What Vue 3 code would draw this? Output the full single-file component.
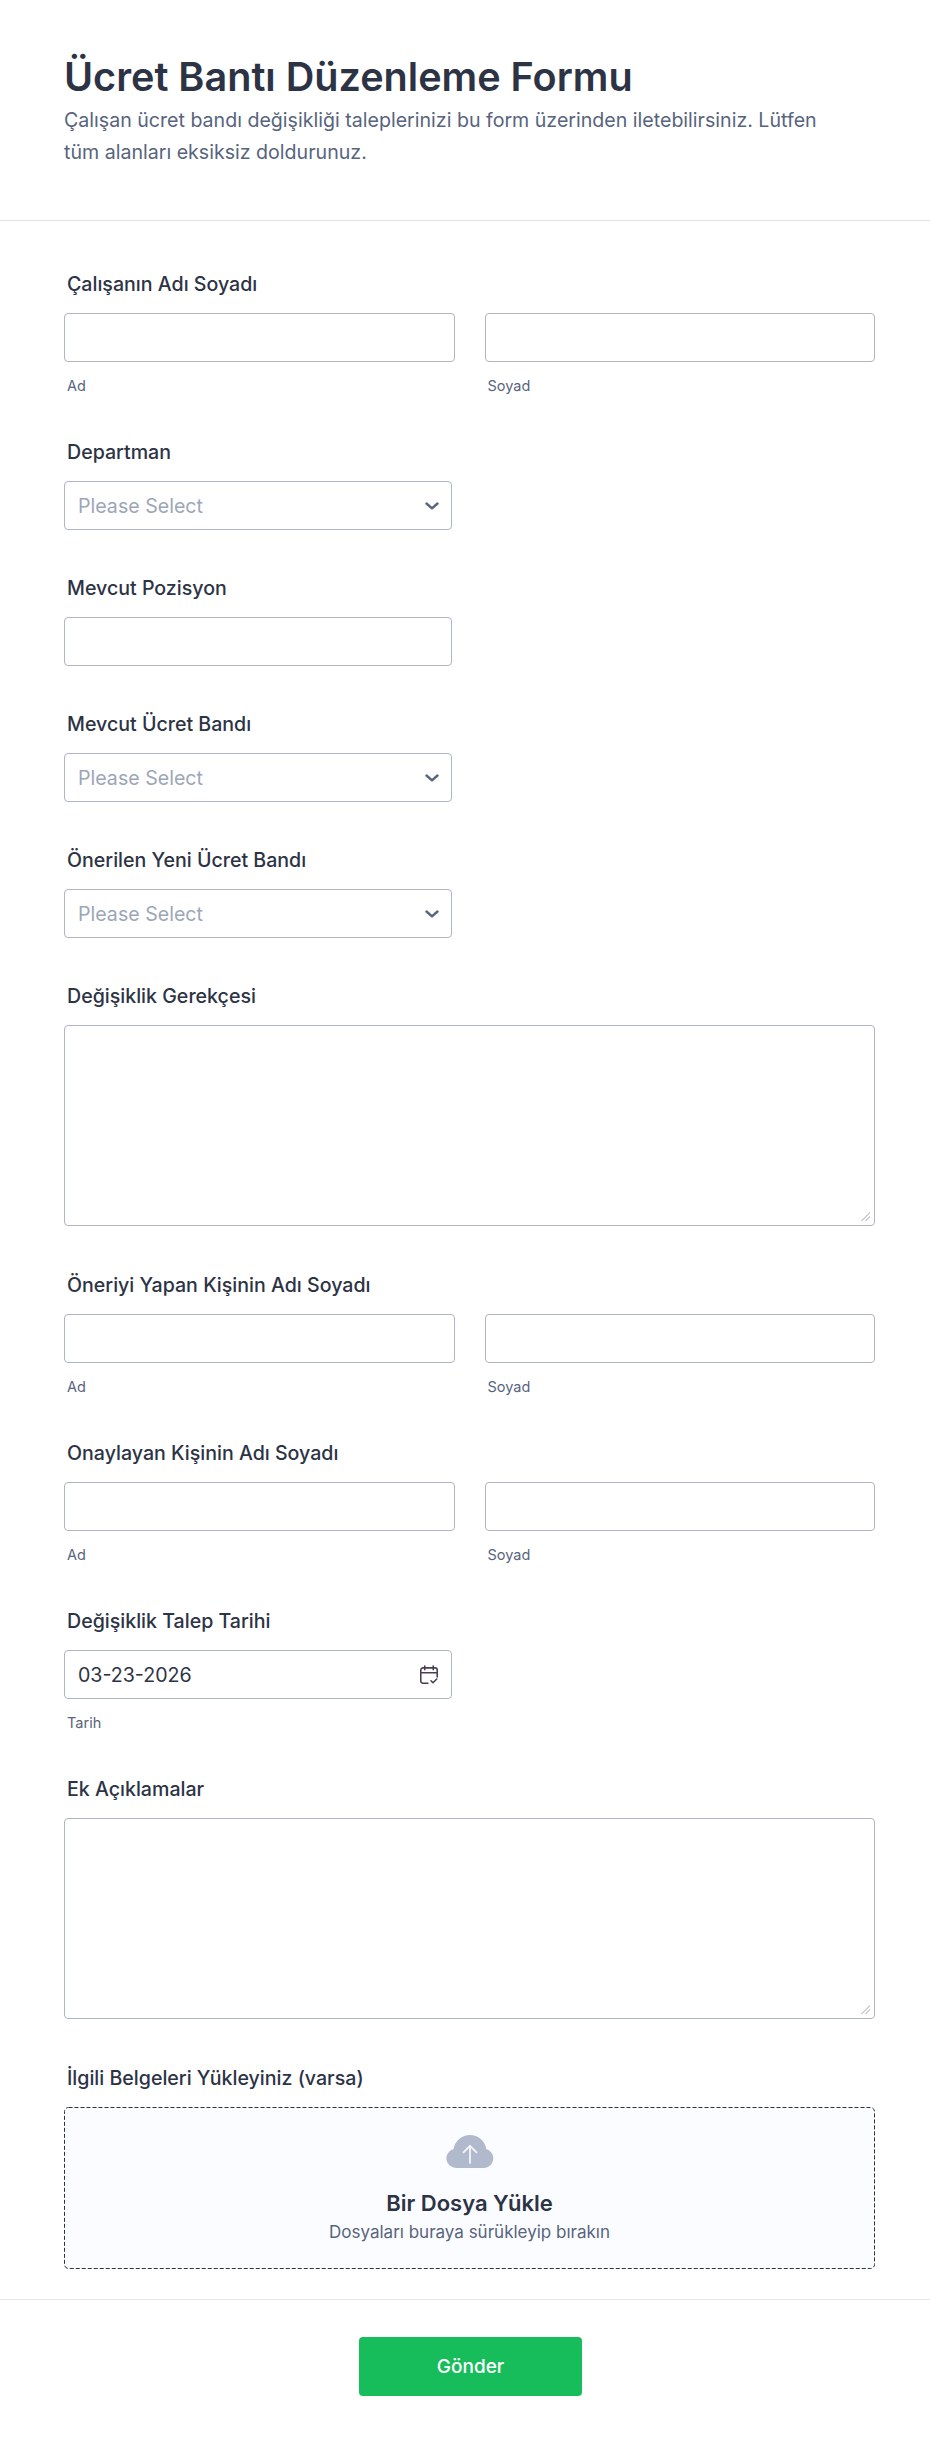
<script setup>
const sectionsTop = [
  { label: 'Departman', kind: 'select' },
  { label: 'Mevcut Pozisyon', kind: 'input' },
  { label: 'Mevcut Ücret Bandı', kind: 'select' },
  { label: 'Önerilen Yeni Ücret Bandı', kind: 'select' }
]
const people = ['Öneriyi Yapan Kişinin Adı Soyadı', 'Onaylayan Kişinin Adı Soyadı']
</script>

<template>
  <main class="form">
    <header class="form__header">
      <h1>Ücret Bantı Düzenleme Formu</h1>
      <p>Çalışan ücret bandı değişikliği taleplerinizi bu form üzerinden iletebilirsiniz. Lütfen tüm alanları eksiksiz doldurunuz.</p>
    </header>

    <section class="form__body">
      <div class="field">
        <label>Çalışanın Adı Soyadı</label>
        <div class="name-row">
          <div>
            <input class="control" type="text" />
            <span class="sublabel">Ad</span>
          </div>
          <div>
            <input class="control" type="text" />
            <span class="sublabel">Soyad</span>
          </div>
        </div>
      </div>

      <div v-for="item in sectionsTop" :key="item.label" class="field">
        <label>{{ item.label }}</label>
        <div v-if="item.kind === 'select'" class="select-wrap">
          <select class="control control--short">
            <option>Please Select</option>
          </select>
          <svg class="select-wrap__arrow" width="14" height="8" viewBox="0 0 14 8" fill="none">
            <path d="M1.500 1.500 7 6.300l5.500-4.800" stroke="#57647e" stroke-width="2.400" stroke-linecap="round" stroke-linejoin="round" />
          </svg>
        </div>
        <input v-else class="control control--short" type="text" />
      </div>

      <div class="field field--area">
        <label>Değişiklik Gerekçesi</label>
        <textarea class="control control--area"></textarea>
      </div>

      <div v-for="person in people" :key="person" class="field">
        <label>{{ person }}</label>
        <div class="name-row">
          <div>
            <input class="control" type="text" />
            <span class="sublabel">Ad</span>
          </div>
          <div>
            <input class="control" type="text" />
            <span class="sublabel">Soyad</span>
          </div>
        </div>
      </div>

      <div class="field">
        <label>Değişiklik Talep Tarihi</label>
        <div class="select-wrap">
          <input class="control control--short" type="text" value="03-23-2026" />
          <svg class="select-wrap__date" width="20" height="20" viewBox="0 0 18 18" fill="none">
            <path d="M8 16.400H3.600a2 2 0 0 1-2-2V4.600a2 2 0 0 1 2-2h10.800a2 2 0 0 1 2 2v6.200M1.600 7h14.800M5.200 1v3.200M12.800 1v3.200M10.800 14.200l1.800 1.800 3.400-3.400" stroke="#4b3f4f" stroke-width="1.400" stroke-linecap="round" stroke-linejoin="round" />
          </svg>
        </div>
        <span class="sublabel">Tarih</span>
      </div>

      <div class="field field--area">
        <label>Ek Açıklamalar</label>
        <textarea class="control control--area"></textarea>
      </div>

      <div class="field field--upload">
        <label>İlgili Belgeleri Yükleyiniz (varsa)</label>
        <div class="dropzone">
          <svg class="dropzone__border" aria-hidden="true">
            <rect />
          </svg>
          <svg width="48" height="33" viewBox="0 0 48 33">
            <path d="M10 33A9.600 9.600 0 0 1 7.600 14.100 16.800 16.800 0 0 1 24 0a16.600 16.600 0 0 1 16.300 14A9.700 9.700 0 0 1 38 33Z" fill="#b1bacd" />
            <path d="M24 28V11M17.500 17.300 24 10.800l6.500 6.500" fill="none" stroke="#f3f5fa" stroke-width="1.800" stroke-linecap="round" stroke-linejoin="round" />
          </svg>
          <strong>Bir Dosya Yükle</strong>
          <span>Dosyaları buraya sürükleyip bırakın</span>
        </div>
      </div>
    </section>

    <footer class="form__footer">
      <button type="button">Gönder</button>
    </footer>
  </main>
</template>

<style>
body {
  background: #ffffff;
}
</style>

<style scoped>
.form {
  width: 930px;
  height: 2446px;
  font-family: Inter, "Liberation Sans", sans-serif;
  color: #2c3345;
  background: #ffffff;
}

.form__header {
  height: 221px;
  box-sizing: border-box;
  padding: 52px 80px 0 64px;
  border-bottom: 1px solid #dfe1ea;
}

.form__header h1 {
  margin: 0;
  font-size: 39.6px;
  line-height: 50px;
  font-weight: 600;
}

.form__header p {
  margin: 2px 0 0;
  font-size: 19.6px;
  line-height: 32px;
  color: #57647e;
}

.form__body {
  padding: 48px 55px 0 64px;
}

.field {
  margin-bottom: 41px;
}

.field label {
  display: block;
  margin: 0 0 14px 3px;
  font-size: 19.6px;
  line-height: 30px;
  font-weight: 500;
}

.name-row {
  display: grid;
  grid-template-columns: 390.5px 390.5px;
  gap: 30px;
}

.control {
  display: block;
  width: 100%;
  height: 49px;
  box-sizing: border-box;
  padding: 0 13px;
  border: 1px solid #b0b5c5;
  border-radius: 4px;
  background: #ffffff;
  font-family: inherit;
  font-size: 19.6px;
  color: #2c3345;
  outline: none;
}

.control--short {
  width: 388px;
}

.control--area {
  height: 201px;
  padding: 10px 13px;
}

.control--area::-webkit-resizer {
  background: linear-gradient(135deg, transparent 48%, #cdd0da 48%, #cdd0da 58%, transparent 58%, transparent 70%, #cdd0da 70%, #cdd0da 80%, transparent 80%) 2px 2px / 9px 9px no-repeat;
}

.select-wrap + .sublabel,
.name-row .sublabel {
  margin-top: 14px;
}

.select-wrap {
  position: relative;
  width: 388px;
  margin-bottom: 43px;
}

.select-wrap:has(+ .sublabel) {
  margin-bottom: 0;
}

select.control {
  appearance: none;
  color: #9ca6b8;
}

.field:has(> input) {
  margin-bottom: 43px;
}

.field--area {
  margin-bottom: 44px;
}

.select-wrap__arrow {
  position: absolute;
  top: 21px;
  right: 13px;
}

.select-wrap__date {
  position: absolute;
  top: 15px;
  right: 13px;
}

.sublabel {
  display: block;
  margin-left: 3px;
  font-size: 14.5px;
  line-height: 20px;
  color: #57647e;
}

.field--upload {
  margin: 0;
}

.dropzone {
  position: relative;
  display: flex;
  flex-direction: column;
  align-items: center;
  height: 162px;
  box-sizing: border-box;
  padding-top: 28px;
  border-radius: 4px;
  background: #fbfcff;
}

.dropzone__border {
  position: absolute;
  inset: 0;
  width: 100%;
  height: 100%;
}

.dropzone__border rect {
  x: 0.5px;
  y: 0.5px;
  width: calc(100% - 1px);
  height: calc(100% - 1px);
  rx: 4px;
  fill: none;
  stroke: #2c3345;
  stroke-width: 1px;
  stroke-dasharray: 4 2;
}

.dropzone strong {
  margin-top: 20px;
  font-size: 22px;
  line-height: 30px;
  font-weight: 600;
}

.dropzone span {
  margin-top: 1px;
  font-size: 17px;
  line-height: 26px;
  color: #57647e;
}

.form__footer {
  display: flex;
  justify-content: center;
  margin-top: 30px;
  padding: 37px 0 0 11px;
  border-top: 1px solid #e3e5ee;
}

.form__footer button {
  width: 223px;
  height: 59px;
  border: none;
  border-radius: 4px;
  background: #18bd5b;
  color: #ffffff;
  font-family: inherit;
  font-size: 19px;
  font-weight: 500;
}
</style>
